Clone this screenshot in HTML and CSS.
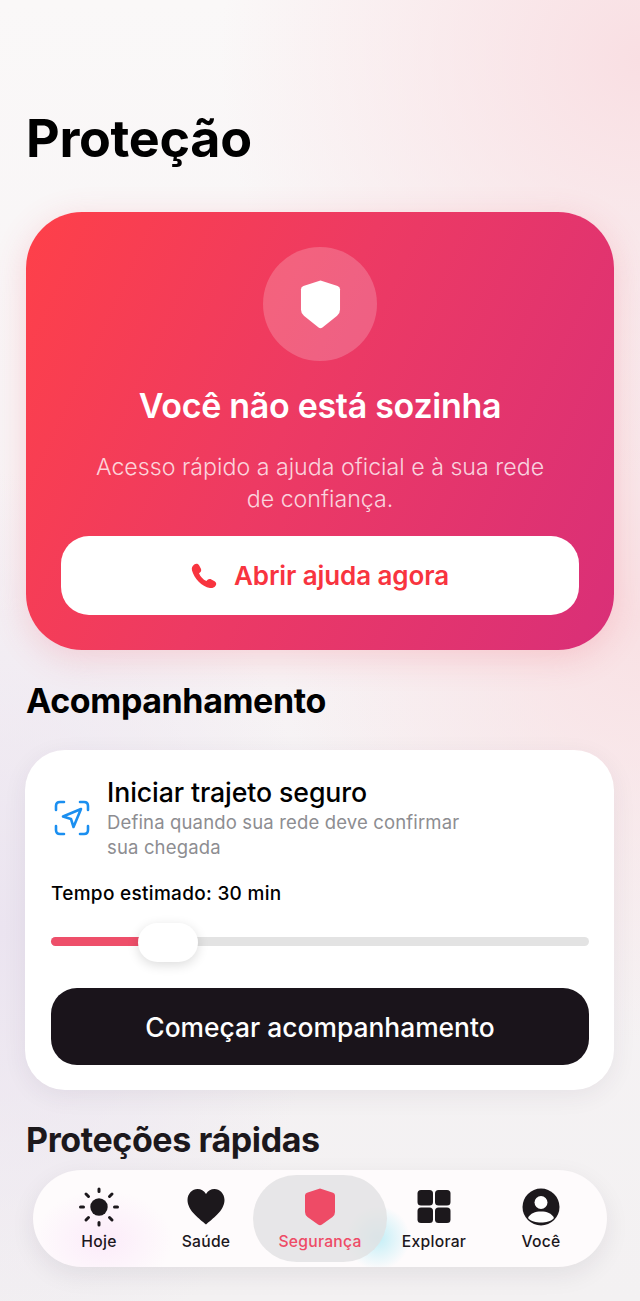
FILE: index.html
```html
<!DOCTYPE html>
<html lang="pt-BR">
<head>
    <meta charset="UTF-8">
    <meta name="viewport" content="width=device-width, initial-scale=1.0">
    <title>Proteção</title>
    <link rel="stylesheet" href="styles.css">
</head>
<body>
    <main class="page">
        <h1 class="page-title">Proteção</h1>

        <section class="hero">
            <div class="hero-circle">
                <svg class="hero-shield" viewBox="0 0 42 50"><path d="M21 0.500 L38.500 6 Q41 7 41 9.500 V30 Q41 34 38 36.500 L23 48.500 Q21 50 19 48.500 L4 36.500 Q1 34 1 30 V9.500 Q1 7 3.500 6 Z" fill="#fff"/></svg>
            </div>
            <h2 class="hero-title">Você não está sozinha</h2>
            <p class="hero-text">Acesso rápido a ajuda oficial e à sua rede de confiança.</p>
            <button class="hero-button">
                <svg class="phone-icon" viewBox="0 0 26 26"><path d="M3.2 1.600 C5 0.200 7.200 0.600 8.200 2.400 L9.800 5.400 C10.600 7 10.200 8.400 9 9.400 L8 10.200 C9.400 13.600 12 16.400 15.400 18 L16.600 16.800 C17.600 15.800 19 15.600 20.400 16.400 L23.600 18.200 C25.400 19.200 25.800 21.400 24.400 23 C23 24.600 21.200 25.400 19 25 C10.600 23.200 3.400 15.800 1 7.400 C0.400 5 1.400 3 3.200 1.600 Z" fill="#f8343f"/></svg>
                <span>Abrir ajuda agora</span>
            </button>
        </section>

        <h2 class="section-title">Acompanhamento</h2>

        <section class="track-card">
            <div class="track-head">
                <svg class="track-icon" viewBox="0 0 36 36" fill="none" stroke="#1b8ff0" stroke-width="2.6" stroke-linecap="round" stroke-linejoin="round">
                    <path d="M2 10 V6 Q2 2 6 2 H10"/>
                    <path d="M26 2 H30 Q34 2 34 6 V10"/>
                    <path d="M34 26 V30 Q34 34 30 34 H26"/>
                    <path d="M10 34 H6 Q2 34 2 30 V26"/>
                    <path d="M27 9 L9 16.500 L17 19 L19.500 27 Z"/>
                </svg>
                <div class="track-copy">
                    <h3 class="track-title">Iniciar trajeto seguro</h3>
                    <p class="track-text">Defina quando sua rede deve confirmar sua chegada</p>
                </div>
            </div>
            <div class="track-time">Tempo estimado: 30 min</div>
            <div class="slider">
                <div class="slider-fill"></div>
                <div class="slider-thumb"></div>
            </div>
            <button class="track-button">Começar acompanhamento</button>
        </section>

        <h2 class="section-title quick-title">Proteções rápidas</h2>
    </main>

    <nav class="tabbar">
        <a class="tab">
            <svg class="tab-icon" viewBox="0 0 40 40" fill="#1c181c" stroke="#1c181c" stroke-width="3" stroke-linecap="round">
                <circle cx="20" cy="20" r="8.700" stroke="none"/>
                <path d="M20 2 V4.500 M20 35.500 V38 M1.500 20 H4.500 M35.500 20 H38.500 M7 7 L9.500 9.500 M30.500 30.500 L33 33 M7 33 L9.500 30.500 M30.500 9.500 L33 7"/>
            </svg>
            <span>Hoje</span>
        </a>
        <a class="tab">
            <svg class="tab-icon" viewBox="0 0 40 40"><path d="M20 37.500 C14 32 1.500 24 1.500 13 C1.500 6.500 6.500 2 11.500 2 C15 2 18 3.800 20 7 C22 3.800 25 2 28.500 2 C33.500 2 38.500 6.500 38.500 13 C38.500 24 26 32 20 37.500 Z" fill="#1c181c"/></svg>
            <span>Saúde</span>
        </a>
        <a class="tab tab-active">
            <svg class="tab-icon" viewBox="0 0 40 40"><path d="M20 1.500 L33 5.800 Q35 6.500 35 8.500 V25 Q35 28 32.500 30 L22 37.500 Q20 39 18 37.500 L7.500 30 Q5 28 5 25 V8.500 Q5 6.500 7 5.800 Z" fill="#ee4b66"/></svg>
            <span>Segurança</span>
        </a>
        <a class="tab">
            <svg class="tab-icon" viewBox="0 0 40 40" fill="#1c181c">
                <rect x="3.500" y="3" width="15.500" height="15.500" rx="3.500"/>
                <rect x="21" y="3" width="15.500" height="15.500" rx="3.500"/>
                <rect x="3.500" y="20.500" width="15.500" height="15.500" rx="3.500"/>
                <rect x="21" y="20.500" width="15.500" height="15.500" rx="3.500"/>
            </svg>
            <span>Explorar</span>
        </a>
        <a class="tab">
            <svg class="tab-icon" viewBox="0 0 40 40">
                <circle cx="20" cy="20" r="18.500" fill="#1c181c"/>
                <circle cx="20" cy="15.500" r="6.500" fill="#fff"/>
                <path d="M7 31 C9.500 26 14 24.500 20 24.500 C26 24.500 30.500 26 33 31 C30 34.500 25 35.500 20 35.500 C15 35.500 10 34.500 7 31 Z" fill="#fff"/>
            </svg>
            <span>Você</span>
        </a>
    </nav>
</body>
</html>
```

FILE: styles.css
```css
html, body {
    margin: 0;
    height: 1301px;
    overflow: hidden;
}
body {
    position: relative;
    font-family: Inter, "Liberation Sans", sans-serif;
    color: #000;
    background:
        radial-gradient(420px 420px at 640px 60px, #f9dfe3 0%, rgba(249, 223, 227, 0) 100%),
        radial-gradient(360px 420px at 640px 620px, #f9e1e4 0%, rgba(249, 225, 228, 0) 100%),
        radial-gradient(320px 460px at 0 930px, #ebe4f0 0%, rgba(235, 228, 240, 0) 100%),
        linear-gradient(180deg, #faf8f8 0%, #f7f3f5 50%, #f3f1f2 100%);
}
button {
    border: none;
    cursor: pointer;
    font-family: inherit;
}

.page {
    padding: 107px 26px 0;
}
.page-title {
    margin: 0 0 42px;
    font-size: 52px;
    line-height: 63px;
    font-weight: 700;
    letter-spacing: -0.3px;
}

/* cartao vermelho */
.hero {
    height: 438px;
    box-sizing: border-box;
    padding: 35px 35px 0;
    border-radius: 56px;
    background: linear-gradient(115deg, #fe4049 0%, #ed3a63 45%, #d92f78 100%);
    box-shadow: 0 8px 34px rgba(240, 70, 90, 0.2);
    text-align: center;
    color: #fff;
}
.hero-circle {
    width: 114px;
    height: 114px;
    margin: 0 auto;
    border-radius: 50%;
    background: rgba(255, 255, 255, 0.2);
    display: flex;
    align-items: center;
    justify-content: center;
}
.hero-shield {
    width: 41px;
    height: 49px;
}
.hero-title {
    margin: 24px 0 0;
    font-size: 34px;
    line-height: 42px;
    font-weight: 600;
    letter-spacing: -0.3px;
}
.hero-text {
    margin: 24px 25px 0;
    font-size: 23.200px;
    line-height: 32px;
    font-weight: 300;
    color: rgba(255, 255, 255, 0.78);
}
.hero-button {
    width: 100%;
    height: 79px;
    margin-top: 21px;
    border-radius: 28px;
    background: #fff;
    display: flex;
    align-items: center;
    justify-content: center;
    gap: 17px;
    color: #f8343f;
    font-size: 26px;
    font-weight: 600;
    letter-spacing: -0.1px;
}
.phone-icon {
    width: 26px;
    height: 26px;
}

.section-title {
    margin: 30px 0 0;
    font-size: 34px;
    line-height: 42px;
    font-weight: 700;
    letter-spacing: -0.4px;
}

/* cartao de acompanhamento */
.track-card {
    margin: 28px 0 0 -1px;
    height: 340px;
    box-sizing: border-box;
    padding: 26px 25px 0 26px;
    border-radius: 40px;
    background: #fff;
    box-shadow: 0 6px 24px rgba(60, 40, 70, 0.07);
}
.track-head {
    display: flex;
    align-items: center;
    gap: 17px;
}
.track-icon {
    width: 36px;
    height: 36px;
    margin-left: 3px;
    flex: none;
}
.track-copy {
    width: 370px;
}
.track-title {
    margin: 0;
    font-size: 26.700px;
    line-height: 32px;
    font-weight: 500;
    letter-spacing: -0.1px;
}
.track-text {
    margin: 2px 0 0;
    font-size: 18.500px;
    line-height: 25px;
    letter-spacing: 0.15px;
    color: #8d8d91;
}
.track-time {
    margin-top: 21px;
    font-size: 19px;
    line-height: 26px;
    font-weight: 500;
    letter-spacing: 0.3px;
}
.slider {
    position: relative;
    height: 9px;
    margin-top: 30px;
    border-radius: 5px;
    background: #e3e3e3;
}
.slider-fill {
    width: 100px;
    height: 100%;
    border-radius: 5px 0 0 5px;
    background: #ee4f6a;
}
.slider-thumb {
    position: absolute;
    left: 87px;
    top: -14px;
    width: 60px;
    height: 39px;
    border-radius: 20px;
    background: #fff;
    box-shadow: 0 3px 12px rgba(0, 0, 0, 0.14);
}
.track-button {
    width: 100%;
    height: 77px;
    margin-top: 42px;
    border-radius: 26px;
    background: #1a141b;
    color: #fff;
    font-size: 26.400px;
    font-weight: 500;
}
.quick-title {
    margin-top: 29px;
    color: #1c181c;
}

/* barra inferior */
.tabbar {
    position: absolute;
    left: 33px;
    top: 1170px;
    width: 574px;
    height: 97px;
    box-sizing: border-box;
    padding: 5px 12.500px;
    border-radius: 49px;
    display: flex;
    background:
        radial-gradient(70px 50px at 70px 70px, rgba(250, 225, 248, 0.6) 0%, rgba(250, 225, 248, 0) 100%),
        radial-gradient(32px 32px at 345px 68px, rgba(180, 235, 245, 0.8) 0%, rgba(180, 235, 245, 0) 100%),
        #fefbfc;
    box-shadow: 0 8px 24px rgba(40, 30, 50, 0.08);
}
.tab {
    flex: none;
    width: 107px;
    height: 87px;
    padding-top: 2px;
    box-sizing: border-box;
    display: flex;
    flex-direction: column;
    align-items: center;
    justify-content: center;
    gap: 5px;
    color: #1c181c;
    font-size: 15.700px;
    line-height: 20px;
    font-weight: 450;
    letter-spacing: 0.25px;
}
.tab-icon {
    width: 40px;
    height: 40px;
}
.tab-active {
    width: 134px;
    margin: 0 -6.500px;
    border-radius: 44px;
    background: rgba(225, 225, 226, 0.8);
    color: #ee4b66;
}
```
